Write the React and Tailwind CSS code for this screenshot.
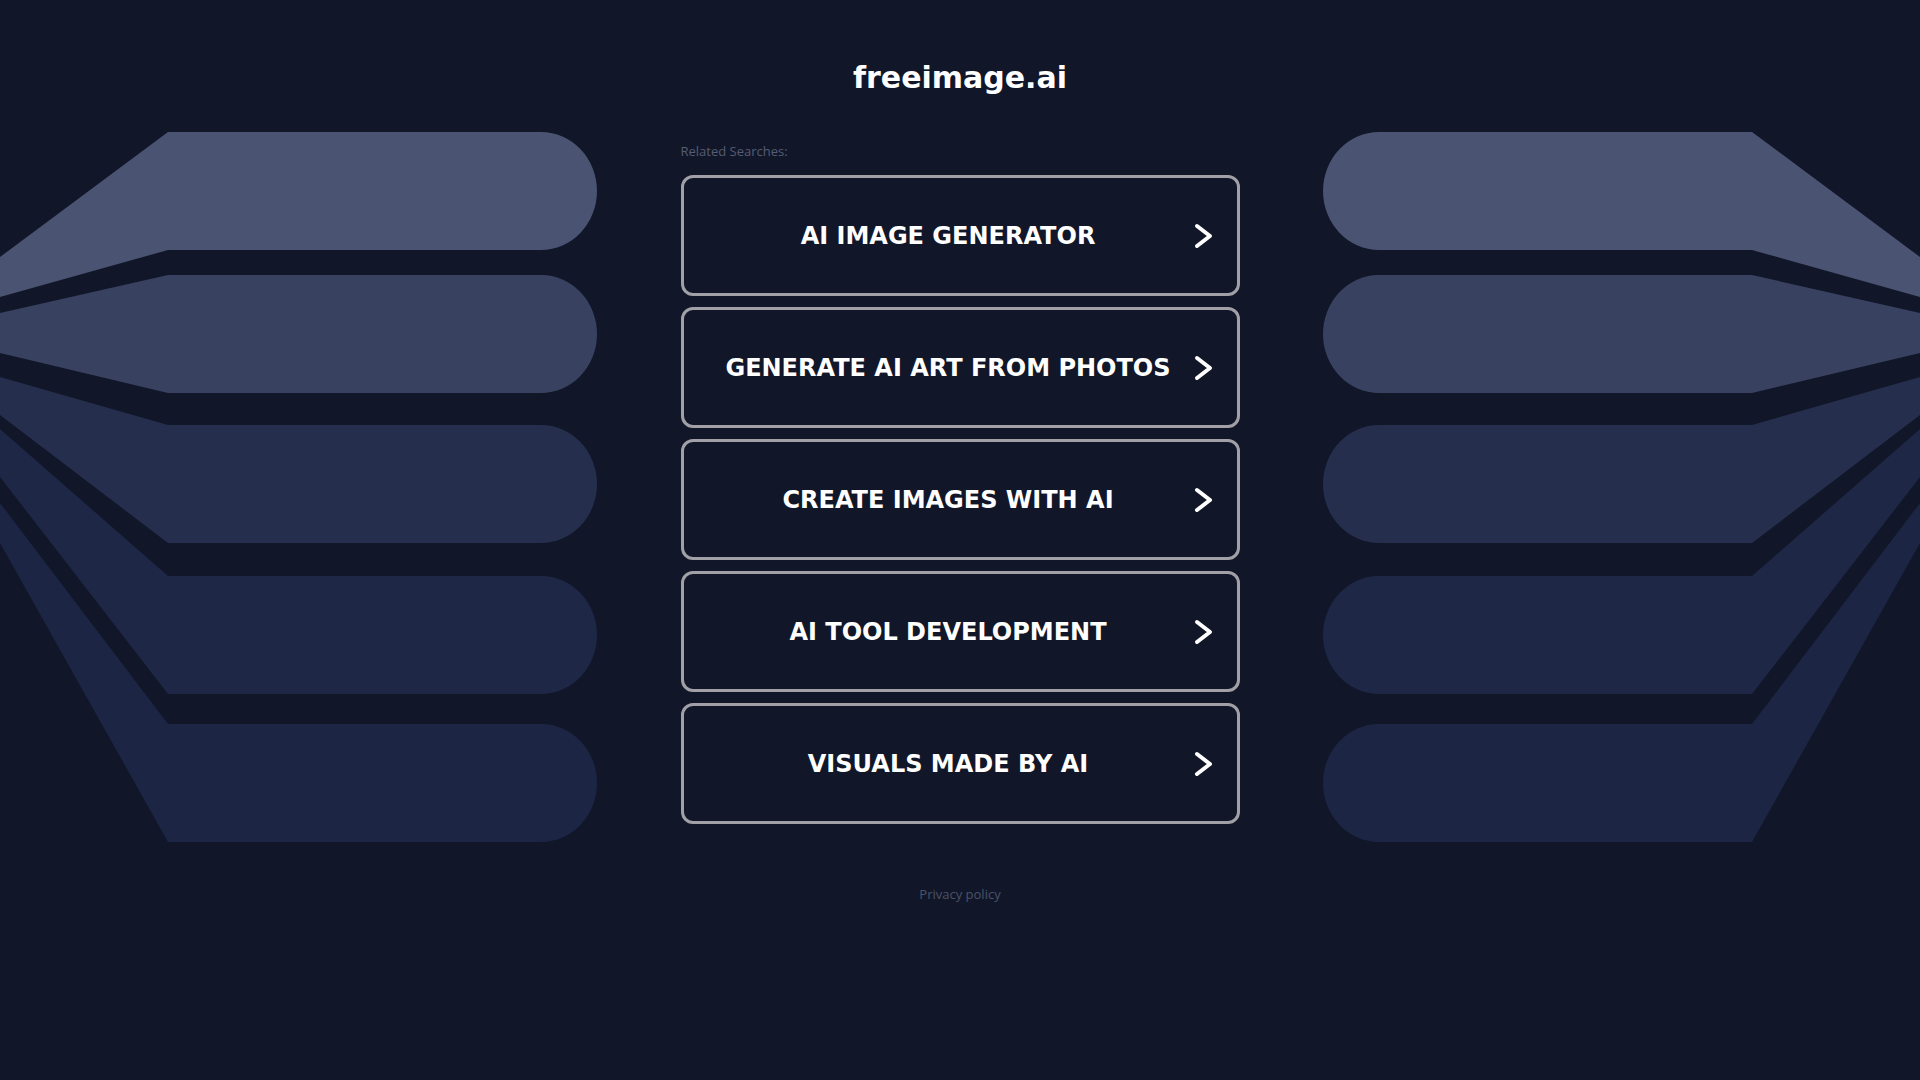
import React from "react";

const searches = [
  "AI IMAGE GENERATOR",
  "GENERATE AI ART FROM PHOTOS",
  "CREATE IMAGES WITH AI",
  "AI TOOL DEVELOPMENT",
  "VISUALS MADE BY AI",
];

// bands of the side decoration: top/bottom of the pill, and where the taper meets x=0
const bands = [
  { t: 132, b: 250, lt: 257, lb: 297, fill: "#4a5472" },
  { t: 275, b: 393, lt: 313, lb: 353, fill: "#384260" },
  { t: 425, b: 543, lt: 377, lb: 415, fill: "#252e4d" },
  { t: 576, b: 694, lt: 429, lb: 477, fill: "#1e2746" },
  { t: 724, b: 842, lt: 503, lb: 543, fill: "#1c2544" },
];

const SideArt = ({ className }) => (
  <svg
    className={className}
    width="600"
    height="860"
    viewBox="0 0 600 860"
    aria-hidden="true"
  >
    {bands.map((band, i) => (
      <path
        key={i}
        fill={band.fill}
        d={`M0 ${band.lt} L168 ${band.t} L541 ${band.t} A56 ${(band.b - band.t) / 2} 0 0 1 541 ${band.b} L168 ${band.b} L0 ${band.lb} Z`}
      />
    ))}
  </svg>
);

const Chevron = () => (
  <svg width="21" height="28" viewBox="0 0 21 28" className="shrink-0">
    <path
      d="M4 4 L17 14 L4 24"
      fill="none"
      stroke="#ffffff"
      strokeWidth="4"
      strokeLinecap="round"
      strokeLinejoin="round"
    />
  </svg>
);

const App = () => {
  return (
    <div className="relative min-h-screen w-full overflow-hidden bg-[#111729]">
      <SideArt className="absolute left-0 top-0" />
      <SideArt className="absolute right-0 top-0 -scale-x-100" />

      <div className="relative z-10 flex flex-col items-center pt-[60px]">
        <h1 className="text-[30px] leading-[36px] font-bold text-white font-['DejaVu_Sans',sans-serif]">
          freeimage.ai
        </h1>

        <div className="mt-[45px] w-[559px]">
          <p className="text-[13px] leading-[20px] text-[#555c73] font-['Open_Sans',sans-serif]">
            Related Searches:
          </p>

          <ul className="mt-[14px] flex flex-col gap-[11px]">
            {searches.map((label) => (
              <li key={label}>
                <a
                  href="#"
                  className="flex h-[121px] items-center rounded-[12px] border-[3px] border-[#a0a0a6] pl-5 pr-[23px] text-white"
                >
                  <span className="flex-1 text-center text-[24px] font-bold font-['DejaVu_Sans',sans-serif]">
                    {label}
                  </span>
                  <Chevron />
                </a>
              </li>
            ))}
          </ul>
        </div>

        <a
          href="#"
          className="mt-[60px] text-[13px] leading-[20px] text-[#4b5268] font-['Open_Sans',sans-serif]"
        >
          Privacy policy
        </a>
      </div>
    </div>
  );
};

export default App;
